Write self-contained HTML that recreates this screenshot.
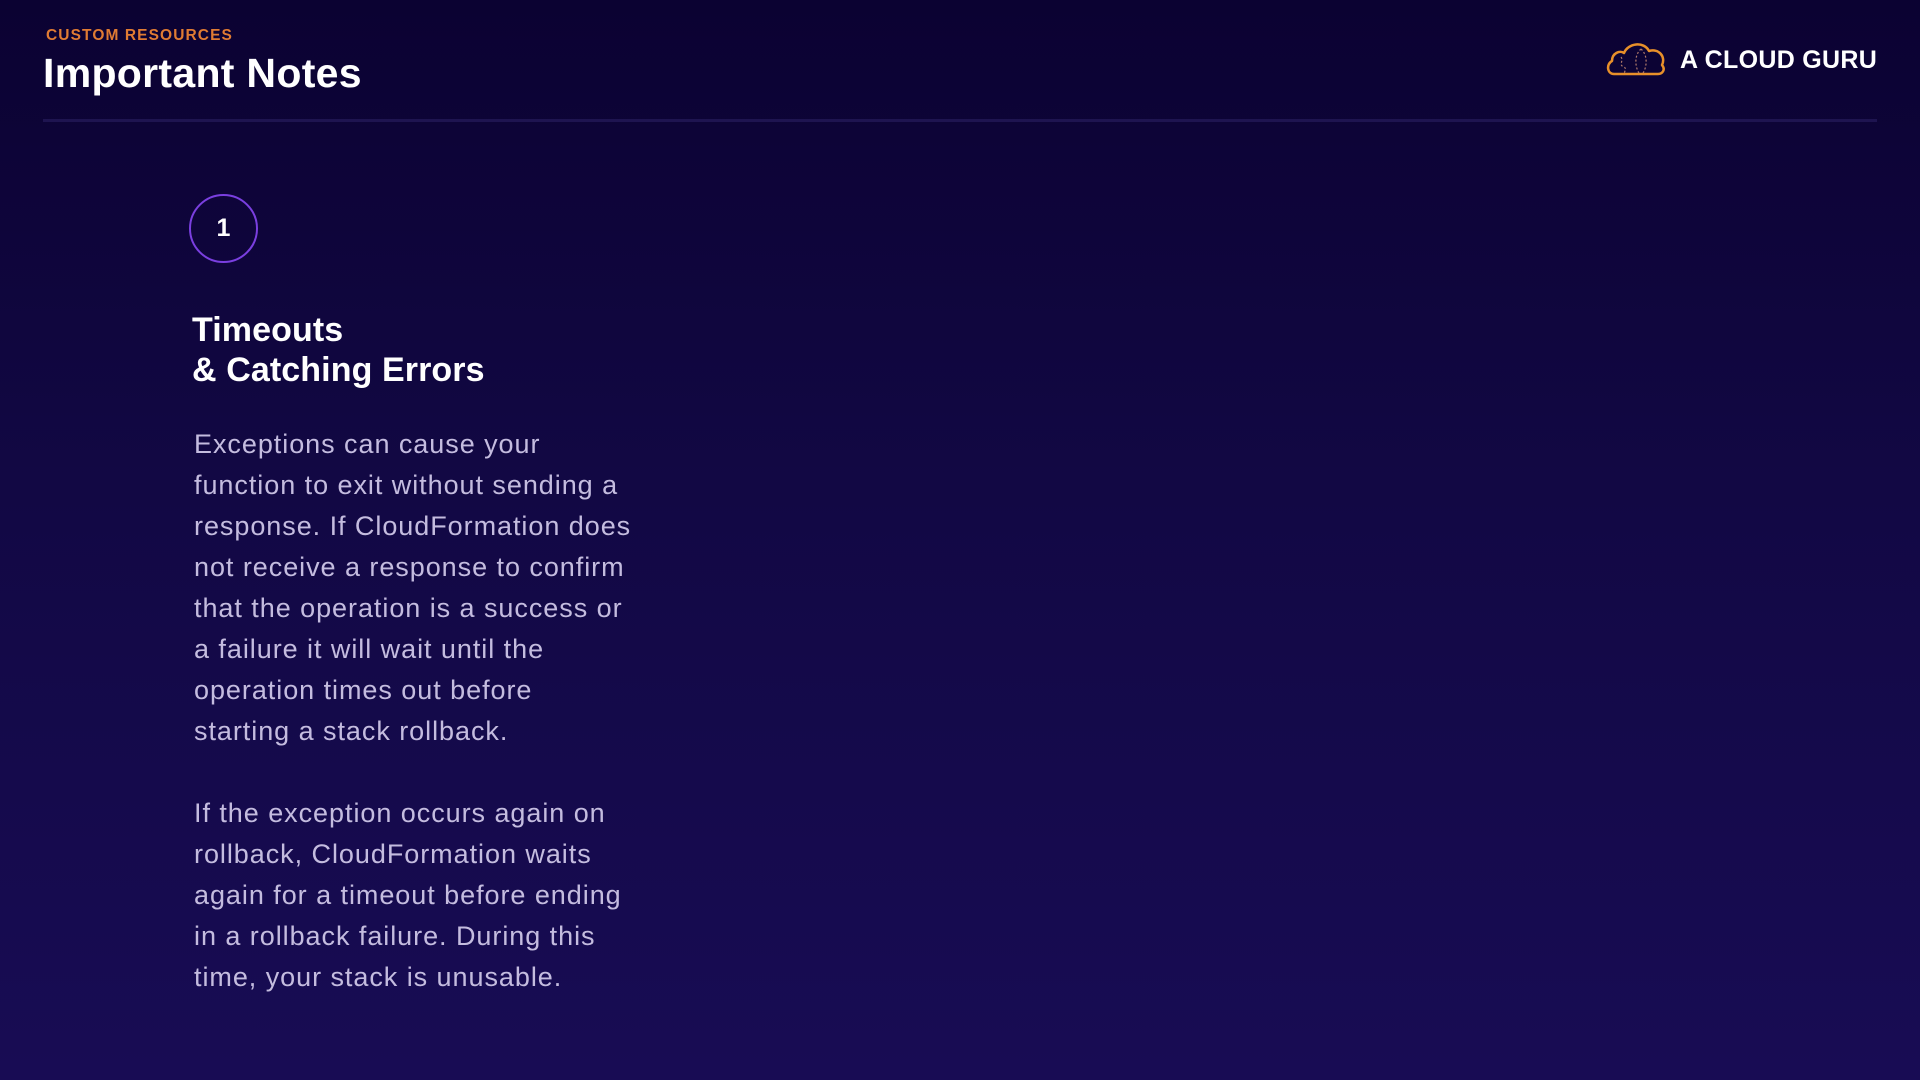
<!DOCTYPE html>
<html><head><meta charset="utf-8"><style>
html,body{margin:0;padding:0}
body{width:1920px;height:1080px;overflow:hidden;background:linear-gradient(180deg,#0b0232 0%,#120844 45%,#180c54 100%);font-family:"Liberation Sans",sans-serif;position:relative}
.sub{position:absolute;left:46px;top:27px;color:#e07b33;font-size:15.5px;font-weight:bold;letter-spacing:1.1px}
.title{position:absolute;left:43px;top:50px;color:#fff;font-size:41px;font-weight:bold;letter-spacing:0.3px}
.rule{position:absolute;left:43px;top:119px;width:1834px;height:3px;background:#1e1450}
.logo{position:absolute;left:1604px;top:37px}
.brand{position:absolute;left:1680px;top:46px;color:#fff;font-size:25px;font-weight:bold;letter-spacing:0.3px}
.circ{position:absolute;left:189px;top:194px;width:65px;height:65px;border:2px solid #7a3fe0;border-radius:50%;color:#fff;font-weight:bold;font-size:25px;text-align:center;line-height:65px}
.h{position:absolute;left:192px;top:310px;color:#fff;font-size:34px;font-weight:bold;line-height:40px;letter-spacing:0.1px}
.p{position:absolute;left:194px;top:424px;color:#c4bcdf;font-size:27px;line-height:41px;white-space:nowrap;letter-spacing:0.95px}
</style></head><body>
<div class="sub">CUSTOM RESOURCES</div>
<div class="title">Important Notes</div>
<div class="rule"></div>
<svg class="logo" width="64" height="40" viewBox="0 0 64 40">
<path d="M10 37 C3 37 2 27 8 24 C8 16 16 13 20 16 C24 6 40 4 45 14 C55 11 62 20 58 28 C62 33 58 37 54 37 Z" fill="none" stroke="#e8902a" stroke-width="2.5" stroke-linejoin="round"/>
<path d="M17 20 C20 24 14 28 20 30 C24 32 18 36 22 37" fill="none" stroke="#b07a6a" stroke-width="1.2" stroke-dasharray="2 2"/>
<path d="M37 12 C30 18 31 30 35 36 M37 12 C44 18 43 30 39 36" fill="none" stroke="#b07a6a" stroke-width="1.2" stroke-dasharray="2 2"/>
</svg>
<div class="brand">A CLOUD GURU</div>
<div class="circ">1</div>
<div class="h">Timeouts<br>&amp; Catching Errors</div>
<div class="p">Exceptions can cause your<br>function to exit without sending a<br>response. If CloudFormation does<br>not receive a response to confirm<br>that the operation is a success or<br>a failure it will wait until the<br>operation times out before<br>starting a stack rollback.<br><br>If the exception occurs again on<br>rollback, CloudFormation waits<br>again for a timeout before ending<br>in a rollback failure. During this<br>time, your stack is unusable.</div>
</body></html>
